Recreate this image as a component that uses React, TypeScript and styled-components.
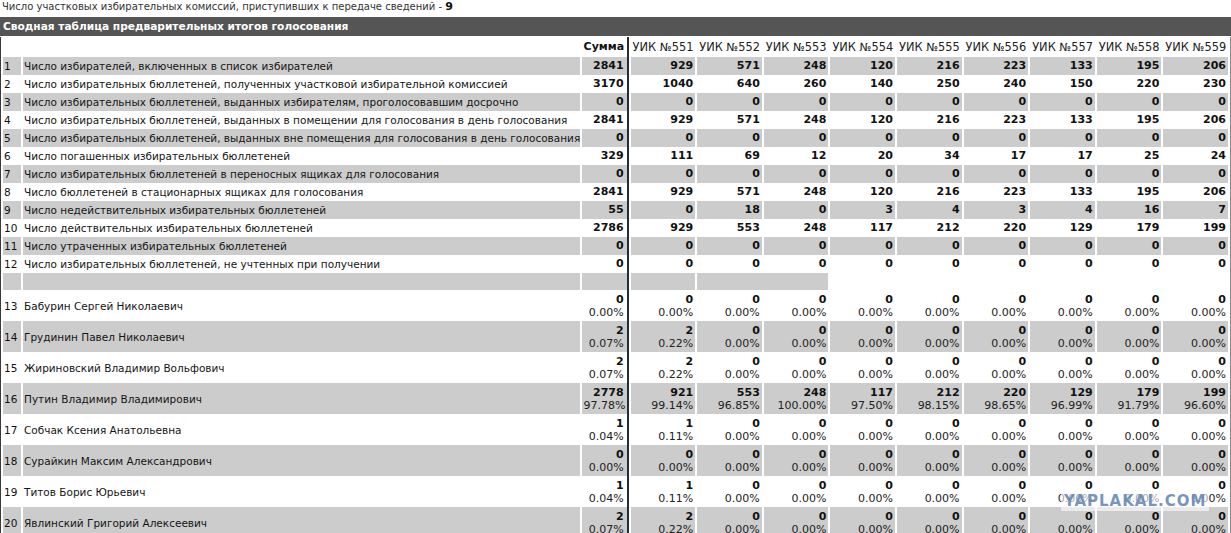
import React from "react";
import styled, { createGlobalStyle } from "styled-components";

const GlobalStyle = createGlobalStyle`
    html, body {
        margin: 0;
        padding: 0;
        overflow: hidden;
        background: #fff;
    }
    body {
        font-family: "DejaVu Sans", Verdana, sans-serif;
        font-size: 11px;
        color: #111;
    }
`;

const Page = styled.div`
    position: relative;
    width: 1231px;
`;

const InfoLine = styled.div`
    height: 17px;
    line-height: 13px;
    padding-left: 2px;
    font-size: 10px;
    color: #333;

    b {
        color: #111;
        font-size: 11px;
    }
`;

const TitleBar = styled.div`
    height: 19px;
    line-height: 19px;
    padding-left: 3px;
    background: #555555;
    color: #fff;
    font-size: 10.6px;
    font-weight: bold;
`;

const Grid = styled.table`
    width: 1231px;
    margin-top: 1px;
    table-layout: fixed;
    border-collapse: separate;
    border-spacing: 2px 0;
    border-left: 1px solid #3a3a3a;
    border-right: 1px solid #8a8a8a;
    font-size: 11px;
`;

const Row = styled.tr<{ $shade?: boolean; $tall?: boolean; $h?: number }>`
    height: ${p => (p.$h ? p.$h : p.$tall ? 31 : 18)}px;

    & > td {
        background: ${p => (p.$shade ? "#cccccc" : "transparent")};
    }
`;

const BaseCell = styled.td`
    box-sizing: border-box;
    padding: 0 2px;
    line-height: 14px;
    white-space: nowrap;
    overflow: hidden;
    vertical-align: middle;
`;

const NumCell = styled(BaseCell)`
    padding-left: 1px;
    padding-right: 0;
    font-size: 10.5px;
`;

const NameCell = styled(BaseCell)`
    padding-left: 1px;
    font-size: 10.5px;
    color: #151515;
`;

const SumCell = styled(BaseCell)`
    text-align: right;
    padding-right: 3px;
    font-weight: bold;
    border-right: 2px solid #252d38;
`;

const UikCell = styled(BaseCell)`
    text-align: right;
    font-weight: bold;
`;

const HeadCell = styled(BaseCell)<{ $bold?: boolean }>`
    text-align: right;
    font-size: 11.4px;
    font-weight: normal;
    color: #222;
`;

const BlankCell = styled(BaseCell)`
    && {
        background: transparent;
    }
`;

const Count = styled.div`
    line-height: 13px;
    font-weight: bold;
`;

const Pct = styled.div`
    line-height: 13px;
    font-weight: normal;
    color: #222;
`;

const Watermark = styled.div`
    position: absolute;
    left: 1061px;
    top: 492px;
    padding: 1px 3px;
    background: rgba(255, 255, 255, 0.6);
    color: rgba(96, 130, 176, 0.85);
    font: bold 15px "DejaVu Sans", Verdana, sans-serif;
    letter-spacing: 1px;
    line-height: 17px;
`;

const uiks = [551, 552, 553, 554, 555, 556, 557, 558, 559];

const zero = [0, 0, 0, 0, 0, 0, 0, 0, 0];
const issued = [929, 571, 248, 120, 216, 223, 133, 195, 206];

const protocol: { title: string; sum: number; values: number[] }[] = [
    { title: "Число избирателей, включенных в список избирателей", sum: 2841, values: issued },
    {
        title: "Число избирательных бюллетеней, полученных участковой избирательной комиссией",
        sum: 3170,
        values: [1040, 640, 260, 140, 250, 240, 150, 220, 230],
    },
    { title: "Число избирательных бюллетеней, выданных избирателям, проголосовавшим досрочно", sum: 0, values: zero },
    {
        title: "Число избирательных бюллетеней, выданных в помещении для голосования в день голосования",
        sum: 2841,
        values: issued,
    },
    {
        title: "Число избирательных бюллетеней, выданных вне помещения для голосования в день голосования",
        sum: 0,
        values: zero,
    },
    { title: "Число погашенных избирательных бюллетеней", sum: 329, values: [111, 69, 12, 20, 34, 17, 17, 25, 24] },
    { title: "Число избирательных бюллетеней в переносных ящиках для голосования", sum: 0, values: zero },
    { title: "Число бюллетеней в стационарных ящиках для голосования", sum: 2841, values: issued },
    { title: "Число недействительных избирательных бюллетеней", sum: 55, values: [0, 18, 0, 3, 4, 3, 4, 16, 7] },
    {
        title: "Число действительных избирательных бюллетеней",
        sum: 2786,
        values: [929, 553, 248, 117, 212, 220, 129, 179, 199],
    },
    { title: "Число утраченных избирательных бюллетеней", sum: 0, values: zero },
    { title: "Число избирательных бюллетеней, не учтенных при получении", sum: 0, values: zero },
];

type Vote = [number, string];
const none: Vote = [0, "0.00%"];
const rest = (first: Vote): Vote[] => [first, none, none, none, none, none, none, none, none];

const candidates: { name: string; sum: Vote; values: Vote[] }[] = [
    { name: "Бабурин Сергей Николаевич", sum: none, values: rest(none) },
    { name: "Грудинин Павел Николаевич", sum: [2, "0.07%"], values: rest([2, "0.22%"]) },
    { name: "Жириновский Владимир Вольфович", sum: [2, "0.07%"], values: rest([2, "0.22%"]) },
    {
        name: "Путин Владимир Владимирович",
        sum: [2778, "97.78%"],
        values: [
            [921, "99.14%"],
            [553, "96.85%"],
            [248, "100.00%"],
            [117, "97.50%"],
            [212, "98.15%"],
            [220, "98.65%"],
            [129, "96.99%"],
            [179, "91.79%"],
            [199, "96.60%"],
        ],
    },
    { name: "Собчак Ксения Анатольевна", sum: [1, "0.04%"], values: rest([1, "0.11%"]) },
    { name: "Сурайкин Максим Александрович", sum: none, values: rest(none) },
    { name: "Титов Борис Юрьевич", sum: [1, "0.04%"], values: rest([1, "0.11%"]) },
    { name: "Явлинский Григорий Алексеевич", sum: [2, "0.07%"], values: rest([2, "0.22%"]) },
];

const VoteValue = ({ vote }: { vote: Vote }) => (
    <>
        <Count>{vote[0]}</Count>
        <Pct>{vote[1]}</Pct>
    </>
);

export default function App() {
    return (
        <Page>
            <GlobalStyle />
            <InfoLine>
                Число участковых избирательных комиссий, приступивших к передаче сведений - <b>9</b>
            </InfoLine>
            <TitleBar>Сводная таблица предварительных итогов голосования</TitleBar>
            <Grid>
                <colgroup>
                    <col style={{ width: 18 }} />
                    <col style={{ width: 556.6 }} />
                    <col style={{ width: 47 }} />
                    {uiks.map(u => (
                        <col key={u} style={{ width: 64.6 }} />
                    ))}
                </colgroup>
                <tbody>
                    <Row $h={20}>
                        <BaseCell />
                        <BaseCell />
                        <SumCell>Сумма</SumCell>
                        {uiks.map(u => (
                            <HeadCell key={u}>УИК №{u}</HeadCell>
                        ))}
                    </Row>
                    {protocol.map((line, i) => (
                        <Row key={line.title} $shade={i % 2 === 0}>
                            <NumCell>{i + 1}</NumCell>
                            <NameCell>{line.title}</NameCell>
                            <SumCell>{line.sum}</SumCell>
                            {line.values.map((v, j) => (
                                <UikCell key={j}>{v}</UikCell>
                            ))}
                        </Row>
                    ))}
                    <Row $shade $h={17}>
                        <NumCell />
                        <NameCell />
                        <SumCell />
                        <UikCell />
                        <UikCell colSpan={2} />
                        {uiks.slice(3).map(u => (
                            <BlankCell key={u} />
                        ))}
                    </Row>
                    {candidates.map((c, i) => (
                        <Row key={c.name} $tall $shade={i % 2 === 1}>
                            <NumCell>{i + 13}</NumCell>
                            <NameCell>{c.name}</NameCell>
                            <SumCell>
                                <VoteValue vote={c.sum} />
                            </SumCell>
                            {c.values.map((v, j) => (
                                <UikCell key={j}>
                                    <VoteValue vote={v} />
                                </UikCell>
                            ))}
                        </Row>
                    ))}
                </tbody>
            </Grid>
            <Watermark>YAPLAKAL.COM</Watermark>
        </Page>
    );
}
